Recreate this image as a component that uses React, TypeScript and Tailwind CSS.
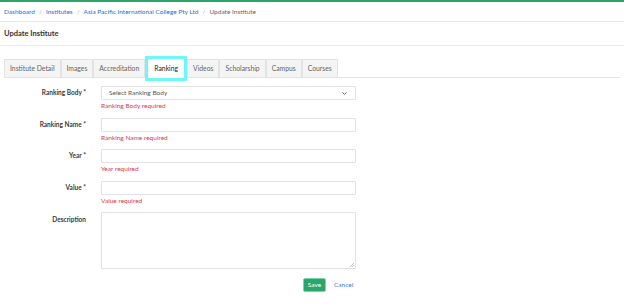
import { ChevronDown } from "lucide-react";

const tabs = ["Institute Detail", "Images", "Accreditation", "Ranking", "Videos", "Scholarship", "Campus", "Courses"];

function Row({ label, error, children, top = false }: { label: string; error?: string; children: React.ReactNode; top?: boolean }) {
	return (
		<div className="flex gap-[15px]">
			<div className={`w-[82px] shrink-0 text-right font-bold text-[#3a3a3a] ${top ? "pt-[3px]" : "h-[14px] leading-[14px]"}`}>{label}</div>
			<div className="w-[255px]">
				{children}
				{error && <p className="text-[6.5px] leading-[8px] text-[#e0364c] mt-[2px] h-[9px]">{error}</p>}
			</div>
		</div>
	);
}

export default function App() {
	return (
		<div className="w-[624px] h-[308px] bg-white text-[7px] font-['Lato',sans-serif] text-[#333] overflow-hidden">
			<div className="h-[2px] bg-[#2ca66d]" />
			<nav className="h-[20px] flex items-center px-[4px] gap-[4px] text-[6.5px] border-b border-[#e9e9e9]">
				<span className="text-[#1d6fd1]">Dashboard</span>
				<span className="text-[#aaa]">/</span>
				<span className="text-[#1d6fd1]">Institutes</span>
				<span className="text-[#aaa]">/</span>
				<span className="text-[#1d6fd1]">Asia Pacific International College Pty Ltd</span>
				<span className="text-[#aaa]">/</span>
				<span className="text-[#666]">Update Institute</span>
			</nav>
			<header className="h-[24px] flex items-center px-[4px] border-b border-[#ebebeb]">
				<h5 className="text-[7.5px] font-bold text-[#333]">Update Institute</h5>
			</header>

			<div className="px-[4px] pt-[13px]">
				<div className="flex border-b border-[#e5e5e5] h-[19px] text-[6.8px]">
					{tabs.map((t) =>
						t === "Ranking" ? (
							<div key={t} className="relative -mt-[3px] -mb-[3px] h-[25px] px-[6px] flex items-center border-[3px] border-[#6ff7f7] bg-white text-[#222] z-10">
								{t}
							</div>
						) : (
							<div key={t} className="h-[18px] px-[5px] flex items-center bg-[#f4f4f4] border border-[#e3e3e3] border-b-0 text-[#666]">
								{t}
							</div>
						)
					)}
				</div>

				<form className="flex flex-col gap-[6.5px] mt-[8px] text-[6.5px]">
					<Row label="Ranking Body *" error="Ranking Body required">
						<div className="h-[14px] border border-[#e2e2e2] rounded-[1px] flex items-center justify-between px-[7px] text-[#555] text-[6.5px]">
							<span>Select Ranking Body</span>
							<ChevronDown className="w-[7px] h-[7px] text-[#555]" strokeWidth={3} />
						</div>
					</Row>
					<Row label="Ranking Name *" error="Ranking Name required">
						<div className="h-[14px] border border-[#e2e2e2] rounded-[1px]" />
					</Row>
					<Row label="Year *" error="Year required">
						<div className="h-[14px] border border-[#e2e2e2] rounded-[1px]" />
					</Row>
					<Row label="Value *" error="Value required">
						<div className="h-[14px] border border-[#e2e2e2] rounded-[1px]" />
					</Row>
					<Row label="Description" top>
						<div className="relative h-[57px] border border-[#e2e2e2] rounded-[1px]">
							<svg className="absolute right-[1px] bottom-[1px]" width="5" height="5" viewBox="0 0 5 5">
								<path d="M5 1L1 5M5 3L3 5" stroke="#999" strokeWidth="0.6" />
							</svg>
						</div>
					</Row>
				</form>

				<div className="flex items-center gap-[8px] ml-[299px] mt-[9px]">
					<button className="h-[14px] w-[23px] rounded-[2px] bg-[#2aa66c] text-white text-[6.5px] border border-[#7fd3aa]">Save</button>
					<span className="text-[#2f7fe0] text-[6.5px]">Cancel</span>
				</div>
			</div>
		</div>
	);
}
